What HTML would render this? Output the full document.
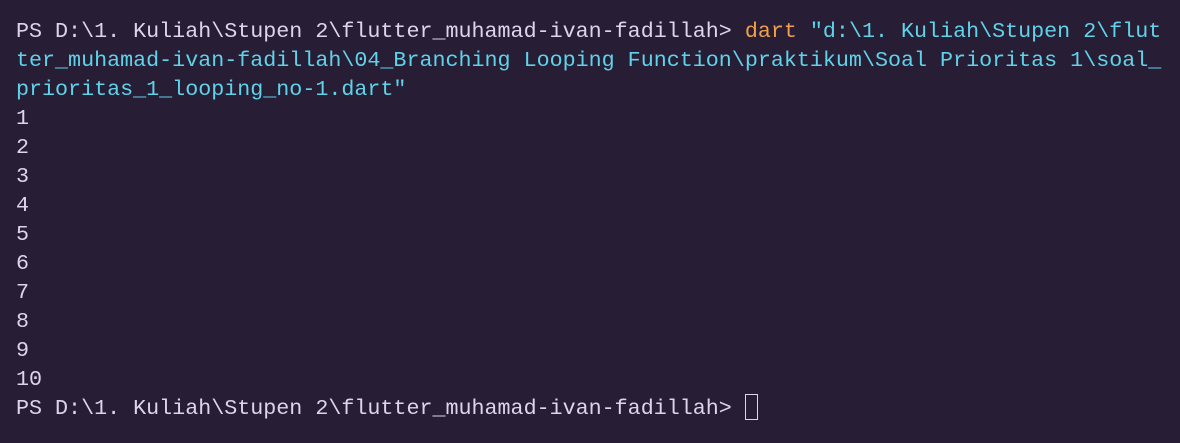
<!DOCTYPE html>
<html><head><style>
html,body{margin:0;padding:0;background:#271e35;width:1180px;height:443px;overflow:hidden}
pre{margin:0;padding:17px 0 0 16px;font-family:"Liberation Mono",monospace;font-size:21.7px;line-height:29px;color:#ddd5ea;white-space:pre}
.o{color:#f0a04b}.c{color:#5fd3ea}
.cur{display:inline-block;width:13px;height:26px;border:1.5px solid #ddd5ea;vertical-align:-6px;box-sizing:border-box}
</style></head><body><pre>PS D:\1. Kuliah\Stupen 2\flutter_muhamad-ivan-fadillah&gt; <span class="o">dart</span> <span class="c">"d:\1. Kuliah\Stupen 2\flut
ter_muhamad-ivan-fadillah\04_Branching Looping Function\praktikum\Soal Prioritas 1\soal_
prioritas_1_looping_no-1.dart"</span>
1
2
3
4
5
6
7
8
9
10
PS D:\1. Kuliah\Stupen 2\flutter_muhamad-ivan-fadillah&gt; <span class="cur"></span></pre></body></html>
